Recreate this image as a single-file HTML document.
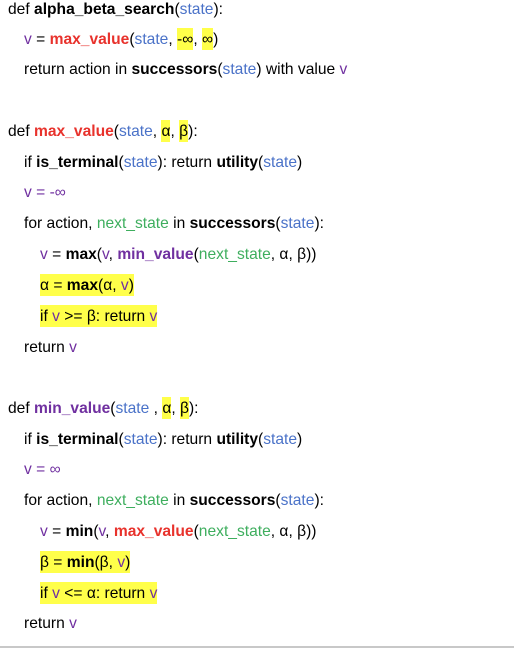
<!DOCTYPE html>
<html><head><meta charset="utf-8"><style>
body{margin:0;width:514px;height:650px;background:#fff;position:relative;overflow:hidden;font-family:"Liberation Sans",sans-serif;font-size:15.6px;color:#000}
.l{position:absolute;white-space:nowrap;line-height:20px}
.b{font-weight:bold}
.s{color:#4a72c8}.r{color:#e8322c;font-weight:bold}.g{color:#3eae5e}.p{color:#7030a0}.pb{color:#7030a0;font-weight:bold}
.h{background:#ffff4a;padding:3px 0 2px}
hr{position:absolute;left:0;top:646px;width:514px;margin:0;border:0;border-top:2px solid #c8c8c8}
</style></head><body>
<div class="l" style="left:8px;top:0px">def <span class="b">alpha_beta_search</span>(<span class="s">state</span>):</div>
<div class="l" style="left:24px;top:30px"><span class="p">v</span> = <span class="r">max_value</span>(<span class="s">state</span>, <span class="h">-∞</span>, <span class="h">∞</span>)</div>
<div class="l" style="left:24px;top:60px">return action in <span class="b">successors</span>(<span class="s">state</span>) with value <span class="p">v</span></div>
<div class="l" style="left:8px;top:122px">def <span class="r">max_value</span>(<span class="s">state</span>, <span class="h">α</span>, <span class="h">β</span>):</div>
<div class="l" style="left:24px;top:153px">if <span class="b">is_terminal</span>(<span class="s">state</span>): return <span class="b">utility</span>(<span class="s">state</span>)</div>
<div class="l" style="left:24px;top:183px"><span class="p">v = -∞</span></div>
<div class="l" style="left:24px;top:214px">for action, <span class="g">next_state</span> in <span class="b">successors</span>(<span class="s">state</span>):</div>
<div class="l" style="left:40px;top:245px"><span class="p">v</span> = <span class="b">max</span>(<span class="p">v</span>, <span class="pb">min_value</span>(<span class="g">next_state</span>, α, β))</div>
<div class="l" style="left:40px;top:276px"><span class="h">α = <span class="b">max</span>(α, <span class="p">v</span>)</span></div>
<div class="l" style="left:40px;top:307px"><span class="h">if <span class="p">v</span> &gt;= β: return <span class="p">v</span></span></div>
<div class="l" style="left:24px;top:338px">return <span class="p">v</span></div>
<div class="l" style="left:8px;top:399px">def <span class="pb">min_value</span>(<span class="s">state</span> , <span class="h">α</span>, <span class="h">β</span>):</div>
<div class="l" style="left:24px;top:430px">if <span class="b">is_terminal</span>(<span class="s">state</span>): return <span class="b">utility</span>(<span class="s">state</span>)</div>
<div class="l" style="left:24px;top:460px"><span class="p">v = ∞</span></div>
<div class="l" style="left:24px;top:491px">for action, <span class="g">next_state</span> in <span class="b">successors</span>(<span class="s">state</span>):</div>
<div class="l" style="left:40px;top:522px"><span class="p">v</span> = <span class="b">min</span>(<span class="p">v</span>, <span class="r">max_value</span>(<span class="g">next_state</span>, α, β))</div>
<div class="l" style="left:40px;top:553px"><span class="h">β = <span class="b">min</span>(β, <span class="p">v</span>)</span></div>
<div class="l" style="left:40px;top:584px"><span class="h">if <span class="p">v</span> &lt;= α: return <span class="p">v</span></span></div>
<div class="l" style="left:24px;top:614px">return <span class="p">v</span></div>
<hr>
</body></html>
